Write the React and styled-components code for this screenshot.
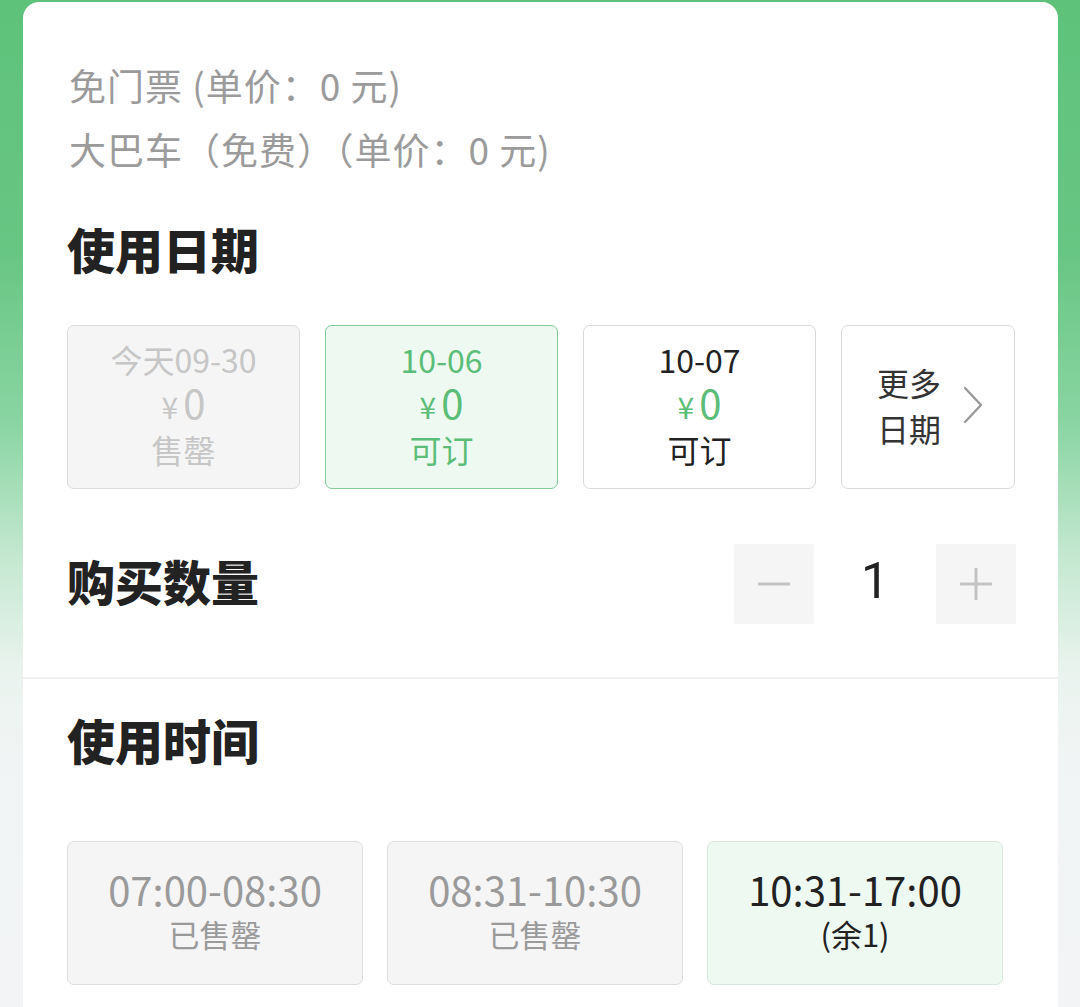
import styled, { createGlobalStyle } from 'styled-components'

const GlobalStyle = createGlobalStyle`
  html, body {
    margin: 0;
    padding: 0;
  }
  body {
    font-family: "Noto Sans CJK SC", "Noto Sans", sans-serif;
    color: #222;
  }
`

const dates = [
  { day: '今天09-30', status: '售罄', state: 'disabled' },
  { day: '10-06', status: '可订', state: 'selected' },
  { day: '10-07', status: '可订', state: 'normal' },
]

const slots = [
  { time: '07:00-08:30', note: '已售罄', state: 'disabled' },
  { time: '08:31-10:30', note: '已售罄', state: 'disabled' },
  { time: '10:31-17:00', note: '(余1)', state: 'selected' },
]

const ChevronRight = () => (
  <svg width='20' height='38' viewBox='0 0 20 38' fill='none'>
    <path d='M2 2 L18 19 L2 36' stroke='#9a9a9a' strokeWidth='2.4' strokeLinecap='round' strokeLinejoin='round' />
  </svg>
)

const MinusIcon = () => (
  <svg width='34' height='34' viewBox='0 0 34 34'>
    <path d='M1 17 H33' stroke='#c2c2c2' strokeWidth='3' />
  </svg>
)

const PlusIcon = () => (
  <svg width='34' height='34' viewBox='0 0 34 34'>
    <path d='M1 17 H33 M17 1 V33' stroke='#c2c2c2' strokeWidth='3' />
  </svg>
)

export default function App() {
  return (
    <StyledPage>
      <GlobalStyle />
      <div className='sheet'>
        <section className='top'>
          <p className='info'>免门票 (单价：0 元)</p>
          <p className='info'>大巴车（免费）（单价：0 元)</p>

          <Heading className='date-title'>使用日期</Heading>
          <div className='date-list'>
            {dates.map((d) => (
              <DateCard key={d.day} $state={d.state}>
                <span className='day'>{d.day}</span>
                <span className='price'>
                  <small>¥</small>0
                </span>
                <span className='status'>{d.status}</span>
              </DateCard>
            ))}
            <MoreCard>
              <span>
                更多
                <br />
                日期
              </span>
              <ChevronRight />
            </MoreCard>
          </div>

          <div className='qty'>
            <Heading $lift>购买数量</Heading>
            <div className='stepper'>
              <StepButton aria-label='减少'>
                <MinusIcon />
              </StepButton>
              <span className='count'>1</span>
              <StepButton aria-label='增加'>
                <PlusIcon />
              </StepButton>
            </div>
          </div>
        </section>

        <section className='bottom'>
          <Heading>使用时间</Heading>
          <div className='slot-list'>
            {slots.map((s) => (
              <SlotCard key={s.time} $state={s.state}>
                <span className='time'>{s.time}</span>
                <span className='note'>{s.note}</span>
              </SlotCard>
            ))}
          </div>
        </section>
      </div>
    </StyledPage>
  )
}

const StyledPage = styled.div`
  min-height: 1007px;
  box-sizing: border-box;
  padding: 2px 22px 0 23px;
  background: linear-gradient(
    180deg,
    #5ec27a 0%,
    #68c683 25%,
    #8ad5a3 42%,
    #c4e8d0 55%,
    #e9f3ee 66%,
    #f1f4f4 75%,
    #f2f4f5 100%
  );
  overflow: hidden;

  .sheet {
    background: #fff;
    border-radius: 16px 16px 0 0;
    min-height: 1010px;
  }

  .top {
    padding: 51px 42px 53px 44px;
    border-bottom: 2px solid #efefef;
  }

  .info {
    margin: 0;
    padding-left: 2px;
    font-size: 37px;
    letter-spacing: 1px;
    line-height: 64px;
    color: #9b9b9b;
    white-space: nowrap;
  }

  .date-title {
    margin-top: 35px;
  }

  .date-list {
    margin-top: 45px;
    display: grid;
    grid-template-columns: repeat(3, 233px) 174px;
    column-gap: 25px;
  }

  .qty {
    margin-top: 55px;
    display: flex;
    align-items: center;
    justify-content: space-between;
  }

  .stepper {
    display: flex;
    align-items: center;
  }

  .count {
    width: 122px;
    padding-bottom: 5px;
    text-align: center;
    font-family: Roboto, "Noto Sans CJK SC", sans-serif;
    font-size: 50px;
    line-height: 75px;
    color: #222;
  }

  .bottom {
    padding: 28px 0 0 44px;
  }

  .slot-list {
    margin-top: 70px;
    display: grid;
    grid-template-columns: repeat(3, 296px);
    column-gap: 24px;
  }
`

const Heading = styled.h2`
  margin: 0;
  padding-bottom: ${({ $lift }) => ($lift ? '9px' : '0')};
  font-size: 48px;
  line-height: 64px;
  font-weight: 900;
  color: #222;
`

const palette = {
  disabled: { bg: '#f5f5f5', border: '#dcdcdc', text: '#c6c6c6', price: '#c6c6c6' },
  selected: { bg: '#eefaf1', border: '#82cd98', text: '#5bbd78', price: '#5bbd78' },
  normal: { bg: '#fff', border: '#d9d9d9', text: '#222', price: '#5bbd78' },
}

const DateCard = styled.div`
  box-sizing: border-box;
  height: 164px;
  border-radius: 7px;
  border: 1.5px solid ${({ $state }) => palette[$state].border};
  background: ${({ $state }) => palette[$state].bg};
  color: ${({ $state }) => palette[$state].text};
  display: flex;
  flex-direction: column;
  align-items: center;
  justify-content: center;
  padding-bottom: 6px;

  .day {
    font-size: 32px;
    line-height: 42px;
  }
  .price {
    font-size: 40px;
    line-height: 44px;
    color: ${({ $state }) => palette[$state].price};
    small {
      font-size: 30px;
      margin-right: 5px;
    }
  }
  .status {
    font-size: 32px;
    line-height: 42px;
  }
`

const MoreCard = styled.div`
  box-sizing: border-box;
  height: 164px;
  border-radius: 7px;
  border: 1.5px solid #d9d9d9;
  background: #fff;
  display: flex;
  align-items: center;
  justify-content: center;
  gap: 22px;
  padding: 0 0 4px 4px;
  font-size: 32px;
  line-height: 46px;
  color: #333;
`

const StepButton = styled.button`
  width: 80px;
  height: 80px;
  border: none;
  border-radius: 2px;
  background: #f5f5f5;
  padding: 0;
  display: flex;
  align-items: center;
  justify-content: center;
`

const slotPalette = {
  disabled: { bg: '#f5f5f5', border: '#dedede', text: '#9a9a9a' },
  selected: { bg: '#eef9f1', border: '#d8e6dc', text: '#222' },
}

const SlotCard = styled.div`
  box-sizing: border-box;
  height: 144px;
  border-radius: 7px;
  border: 1.5px solid ${({ $state }) => slotPalette[$state].border};
  background: ${({ $state }) => slotPalette[$state].bg};
  color: ${({ $state }) => slotPalette[$state].text};
  display: flex;
  flex-direction: column;
  align-items: center;
  justify-content: center;
  padding-bottom: 4px;

  .time {
    font-size: 40px;
    line-height: 46px;
  }
  .note {
    font-size: 31px;
    line-height: 44px;
  }
`
